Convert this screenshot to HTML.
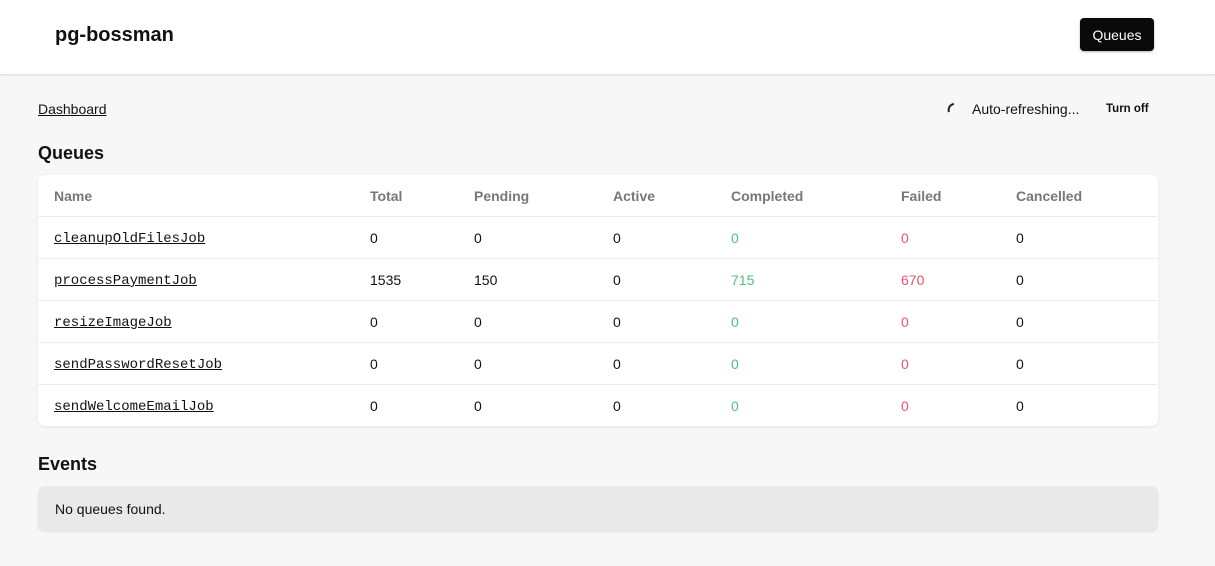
<!DOCTYPE html>
<html><head><style>
*{box-sizing:border-box;margin:0;padding:0}
body{width:1215px;height:566px;background:#f7f7f7;font-family:"Liberation Sans",sans-serif;color:#111;position:relative;overflow:hidden}
.hdr{position:absolute;left:0;top:0;width:1215px;height:75px;background:#fff;border-bottom:1px solid #e2e2e2;box-shadow:0 1px 2px rgba(0,0,0,.06)}
.logo{position:absolute;left:55px;top:24px;font-size:20px;font-weight:bold}
.btn{position:absolute;left:1080px;top:18px;width:74px;height:33px;background:#0a0a0a;color:#fff;border-radius:4px;font-size:14px;text-align:center;line-height:34px;box-shadow:0 1px 2px rgba(0,0,0,.3)}
.a{position:absolute;font-size:14px}
.h{position:absolute;font-size:18px;font-weight:bold}
.card{position:absolute;left:38px;top:175px;width:1120px;height:251px;background:#fff;border-radius:7px;box-shadow:0 1px 3px rgba(0,0,0,.08)}
.row{position:absolute;left:0;width:1120px;height:42px;border-bottom:1px solid #ececec;font-size:14px}
.row span{position:absolute;top:13px}
.th span{color:#777;font-weight:bold}
.row span.mono{font-family:"Liberation Mono",monospace;font-size:14px;text-decoration:underline;top:14px}
.g{color:#4fc27a}.r{color:#e8546b}
.ev{position:absolute;left:38px;top:486px;width:1120px;height:45px;background:#e9e9e9;border-radius:7px;font-size:14px;padding:15px 17px;box-shadow:0 1px 2px rgba(0,0,0,.08)}
</style></head><body>
<div class="hdr"><div class="logo">pg-bossman</div><div class="btn">Queues</div></div>
<div class="a" style="left:38px;top:101px;text-decoration:underline">Dashboard</div>
<svg style="position:absolute;left:946px;top:101px" width="14" height="14"><path d="M3 11 A6 6 0 0 1 8 3" stroke="#222" stroke-width="2" fill="none"/></svg>
<div class="a" style="left:972px;top:101px">Auto-refreshing...</div>
<div class="a" style="left:1106px;top:103px;font-size:11.5px;font-weight:bold">Turn off</div>
<div class="h" style="left:38px;top:143px">Queues</div>
<div class="card">
<div class="row th" style="top:0"><span style="left:16px">Name</span><span style="left:332px">Total</span><span style="left:436px">Pending</span><span style="left:575px">Active</span><span style="left:693px">Completed</span><span style="left:863px">Failed</span><span style="left:978px">Cancelled</span></div>
<div class="row" style="top:42px"><span class="mono" style="left:16px">cleanupOldFilesJob</span><span style="left:332px">0</span><span style="left:436px">0</span><span style="left:575px">0</span><span class="g" style="left:693px">0</span><span class="r" style="left:863px">0</span><span style="left:978px">0</span></div>
<div class="row" style="top:84px"><span class="mono" style="left:16px">processPaymentJob</span><span style="left:332px">1535</span><span style="left:436px">150</span><span style="left:575px">0</span><span class="g" style="left:693px">715</span><span class="r" style="left:863px">670</span><span style="left:978px">0</span></div>
<div class="row" style="top:126px"><span class="mono" style="left:16px">resizeImageJob</span><span style="left:332px">0</span><span style="left:436px">0</span><span style="left:575px">0</span><span class="g" style="left:693px">0</span><span class="r" style="left:863px">0</span><span style="left:978px">0</span></div>
<div class="row" style="top:168px"><span class="mono" style="left:16px">sendPasswordResetJob</span><span style="left:332px">0</span><span style="left:436px">0</span><span style="left:575px">0</span><span class="g" style="left:693px">0</span><span class="r" style="left:863px">0</span><span style="left:978px">0</span></div>
<div class="row" style="top:210px;border:none"><span class="mono" style="left:16px">sendWelcomeEmailJob</span><span style="left:332px">0</span><span style="left:436px">0</span><span style="left:575px">0</span><span class="g" style="left:693px">0</span><span class="r" style="left:863px">0</span><span style="left:978px">0</span></div>
</div>
<div class="h" style="left:38px;top:454px">Events</div>
<div class="ev">No queues found.</div>
</body></html>
